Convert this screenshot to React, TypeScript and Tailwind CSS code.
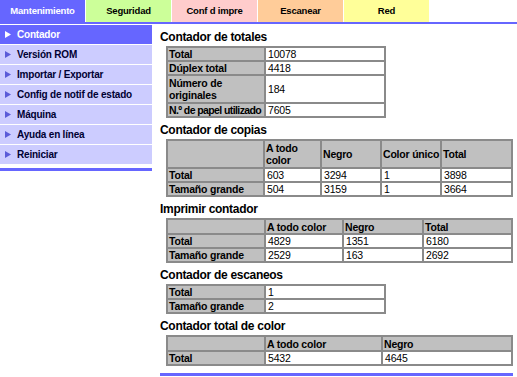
import React from "react";

const tabs = [
  { label: "Mantenimiento", cls: "bg-[#6666ff] text-white" },
  { label: "Seguridad", cls: "bg-[#ccff99] text-black" },
  { label: "Conf d impre", cls: "bg-[#ffcccc] text-black" },
  { label: "Escanear", cls: "bg-[#ffcc99] text-black" },
  { label: "Red", cls: "bg-[#ffff99] text-black" },
];

const menu = [
  "Contador",
  "Versión ROM",
  "Importar / Exportar",
  "Config de notif de estado",
  "Máquina",
  "Ayuda en línea",
  "Reiniciar",
];

function Arrow({ active }: { active: boolean }) {
  return (
    <svg width="6" height="7" viewBox="0 0 6 7" className="shrink-0">
      <polygon points="0,0 6,3.5 0,7" fill={active ? "#ffffff" : "#5a5ad8"} />
    </svg>
  );
}

function Heading({ children }: { children: React.ReactNode }) {
  return (
    <div className="text-[12px] font-bold tracking-[-0.3px] leading-[15px] text-black mt-[5px] mb-[1px]">
      {children}
    </div>
  );
}

// label cell (gray) and value cell (white)
const th = "bg-[#c0c0c0] font-bold text-left align-middle px-[1px] p-0 overflow-hidden";
const td = "bg-white text-left align-middle px-[2px] p-0 overflow-hidden";

// labels that break onto two lines in the original
const wrapping = ["Número de originales", "A todo color"];

function Grid({
  width,
  widths,
  head,
  rows,
  tall,
}: {
  width: string;
  widths: number[];
  head?: string[];
  rows: string[][];
  tall?: boolean;
}) {
  const nowrap = (s: string) => {
    if (s === "N.º de papel utilizado") return "whitespace-nowrap tracking-[-0.6px]";
    if ((tall && wrapping.includes(s)) || s === wrapping[0]) return "h-[26px]";
    return "whitespace-nowrap";
  };
  return (
    <table
      className={`${width} ml-[6px] table-fixed border-separate border-spacing-[2px] bg-[#8a8a8a] text-[10.5px] tracking-[-0.2px] leading-[12px] text-black`}
    >
      <colgroup>
        {widths.map((w, i) => (
          <col key={i} style={{ width: w }} />
        ))}
      </colgroup>
      <tbody>
        {head && (
          <tr>
            {head.map((h, i) => (
              <td key={i} className={`${th} ${tall ? "h-[26px]" : "h-[13px]"} ${nowrap(h)}`}>
                {h}
              </td>
            ))}
          </tr>
        )}
        {rows.map((r, ri) => (
          <tr key={ri}>
            {r.map((c, ci) => (
              <td key={ci} className={`${ci === 0 ? th : td} h-[12px] ${nowrap(c)}`}>
                {c}
              </td>
            ))}
          </tr>
        ))}
      </tbody>
    </table>
  );
}

export default function App() {
  return (
    <div className="w-[517px] h-[377px] bg-white overflow-hidden font-['Liberation_Sans',Arial,sans-serif]">
      <div className="flex h-[22px] gap-[1px]">
        {tabs.map((t) => (
          <div
            key={t.label}
            className={`w-[85px] flex items-center justify-center text-[9.5px] tracking-[-0.2px] font-bold ${t.cls}`}
          >
            {t.label}
          </div>
        ))}
      </div>
      <div className="h-[2px] bg-[#6666ff]" />
      <div className="flex mt-[1px]">
        <div className="w-[152px] shrink-0 flex flex-col">
          <div className="flex flex-col gap-[1px]">
            {menu.map((m, i) => (
              <div
                key={m}
                className={`h-[19px] flex items-center gap-[6px] pl-[5px] text-[10px] tracking-[-0.2px] font-bold ${
                  i === 0 ? "bg-[#6666ff] text-white" : "bg-[#ccccff] text-[#000033]"
                }`}
              >
                <Arrow active={i === 0} />
                <span>{m}</span>
              </div>
            ))}
          </div>
          <div className="h-[3px] bg-[#6666ff] mt-[4px]" />
        </div>
        <div className="ml-[8px] w-[353px] flex flex-col">
          <Heading>Contador de totales</Heading>
          <Grid
            width="w-[220px]"
            widths={[96, 118]}
            rows={[
              ["Total", "10078"],
              ["Dúplex total", "4418"],
              ["Número de originales", "184"],
              ["N.º de papel utilizado", "7605"],
            ]}
          />
          <Heading>Contador de copias</Heading>
          <Grid
            width="w-[347px]"
            widths={[95, 55, 58, 58, 69]}
            head={["", "A todo color", "Negro", "Color único", "Total"]}
            tall
            rows={[
              ["Total", "603", "3294", "1", "3898"],
              ["Tamaño grande", "504", "3159", "1", "3664"],
            ]}
          />
          <Heading>Imprimir contador</Heading>
          <Grid
            width="w-[347px]"
            widths={[96, 76, 78, 87]}
            head={["", "A todo color", "Negro", "Total"]}
            rows={[
              ["Total", "4829", "1351", "6180"],
              ["Tamaño grande", "2529", "163", "2692"],
            ]}
          />
          <Heading>Contador de escaneos</Heading>
          <Grid
            width="w-[220px]"
            widths={[96, 118]}
            rows={[
              ["Total", "1"],
              ["Tamaño grande", "2"],
            ]}
          />
          <Heading>Contador total de color</Heading>
          <Grid
            width="w-[347px]"
            widths={[96, 115, 128]}
            head={["", "A todo color", "Negro"]}
            rows={[["Total", "5432", "4645"]]}
          />
          <div className="h-[3px] bg-[#6666ff] mt-[7px]" />
        </div>
      </div>
    </div>
  );
}
